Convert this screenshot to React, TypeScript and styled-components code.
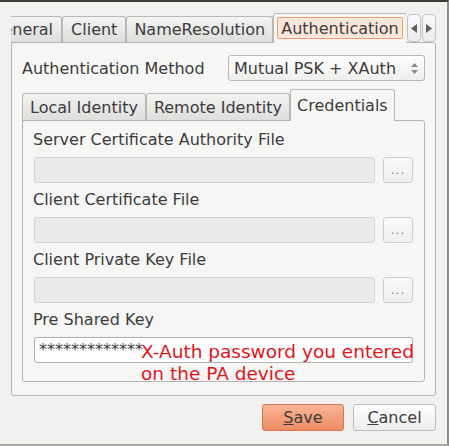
import React from "react";
import styled, { createGlobalStyle, css } from "styled-components";

const GlobalStyle = createGlobalStyle`
  html, body {
    margin: 0;
    padding: 0;
    background: #f2f1f0;
  }
  body {
    font-family: "DejaVu Sans", "Liberation Sans", sans-serif;
    font-size: 16px;
    color: #3c3c3c;
  }
`;

const Window = styled.div`
  width: 449px;
  height: 446px;
  box-sizing: border-box;
  border-top: 2px solid #3c3b37;
  border-right: 2px solid #8e8d8a;
  border-bottom: 2px solid #a9a8a5;
  padding: 11px 11px 0 11px;
  display: flex;
  flex-direction: column;
`;

const Notebook = styled.div`
  display: flex;
  flex-direction: column;
`;

const TabBar = styled.div<{ $h: number }>`
  display: flex;
  align-items: flex-end;
  height: ${p => p.$h}px;
  margin-bottom: -1px;
  position: relative;
  z-index: 1;
`;

const TabScroller = styled.div`
  flex: 1;
  display: flex;
  align-items: flex-end;
  height: 100%;
  overflow: hidden;
`;

const TabRow = styled.div<{ $shift?: number }>`
  display: flex;
  align-items: flex-end;
  margin-left: ${p => -(p.$shift || 0)}px;
`;

const Tab = styled.div<{ $active?: boolean; $h: number; $pad: number }>`
  flex: none;
  box-sizing: border-box;
  height: ${p => p.$h}px;
  padding: 0 ${p => p.$pad}px;
  display: flex;
  align-items: center;
  white-space: nowrap;
  border: 1px solid #b9b8b6;
  border-radius: 3px 3px 0 0;
  line-height: 19px;
  ${p =>
    p.$active
      ? css`
          background: #f6f6f5;
          border-bottom: none;
          padding-bottom: 1px;
        `
      : css`
          background: linear-gradient(#f3f3f2, #dededc);
          border-bottom-color: #b5b4b2;
        `}
`;

const FocusRing = styled.span`
  display: inline-flex;
  align-items: center;
  height: 22px;
  box-sizing: border-box;
  padding: 0 3px;
  border: 1px solid #f09a76;
  border-radius: 2px;
  background: #fde6da;
`;

const ScrollArrows = styled.div`
  display: flex;
  gap: 1px;
  margin-left: 1px;
  align-self: flex-start;
  margin-top: 1px;
`;

const ArrowButton = styled.div`
  width: 14px;
  height: 28px;
  box-sizing: border-box;
  border: 1px solid #c4c3c1;
  border-radius: 4px;
  background: linear-gradient(#fbfbfb, #ececeb);
  display: flex;
  align-items: center;
  justify-content: center;
`;

const Pane = styled.div<{ $pad: string }>`
  border: 1px solid #b5b4b2;
  border-radius: 3px;
  background: #f6f6f5;
  padding: ${p => p.$pad};
  display: flex;
  flex-direction: column;
`;

const MethodRow = styled.div`
  display: flex;
  align-items: center;
  justify-content: space-between;
  height: 26px;
  margin-bottom: 8px;
  line-height: 19px;
`;

const Combo = styled.div`
  width: 197px;
  height: 26px;
  box-sizing: border-box;
  border: 1px solid #b8b7b5;
  border-radius: 3px;
  background: linear-gradient(#fdfdfd, #efefee);
  display: flex;
  align-items: center;
  justify-content: space-between;
  padding: 0 6px 0 5px;
`;

const Field = styled.div`
  display: flex;
  flex-direction: column;
  & + & {
    margin-top: 7px;
  }
`;

const Label = styled.div`
  line-height: 19px;
  margin-bottom: 8px;
  white-space: nowrap;
`;

const InputRow = styled.div`
  display: flex;
  gap: 8px;
  height: 26px;
  position: relative;
`;

const TextBox = styled.div<{ $disabled?: boolean }>`
  flex: 1;
  box-sizing: border-box;
  border: 1px solid ${p => (p.$disabled ? "#d3d2d0" : "#b2b1af")};
  border-radius: 3px;
  background: ${p => (p.$disabled ? "#ebeae9" : "#ffffff")};
  margin-left: 1px;
  padding: 2px 4px 0;
  line-height: 19px;
  white-space: nowrap;
  overflow: hidden;
`;

const BrowseButton = styled.div`
  width: 30px;
  box-sizing: border-box;
  border: 1px solid #cfcecc;
  border-radius: 3px;
  background: linear-gradient(#f9f9f9, #efefee);
  color: #8f8e8c;
  font-size: 12px;
  letter-spacing: 1px;
  display: flex;
  align-items: flex-end;
  justify-content: center;
  padding-bottom: 5px;
`;

const Annotation = styled.div`
  position: absolute;
  left: 108px;
  top: 4px;
  color: #e3141b;
  font-size: 18.5px;
  line-height: 22px;
  white-space: nowrap;
  pointer-events: none;
`;

const ButtonRow = styled.div`
  display: flex;
  justify-content: flex-end;
  gap: 9px;
  margin-top: 8px;
`;

const DialogButton = styled.button<{ $primary?: boolean }>`
  width: ${p => (p.$primary ? 82 : 83)}px;
  height: 27px;
  box-sizing: border-box;
  border-radius: 3px;
  font-family: inherit;
  font-size: 16px;
  color: #3c3c3c;
  padding: 0;
  line-height: 19px;
  ${p =>
    p.$primary
      ? css`
          border: 1px solid #d4784f;
          background: linear-gradient(#f9b495, #ee8c64);
        `
      : css`
          border: 1px solid #bdbcba;
          background: linear-gradient(#fefefe, #ececeb);
        `}
`;

const Arrow = ({ dir }: { dir: "left" | "right" }) => (
  <svg width="6" height="9" viewBox="0 0 6 9">
    <path d={dir === "left" ? "M6 0 L0 4.5 L6 9 Z" : "M0 0 L6 4.5 L0 9 Z"} fill="#5f5e5c" />
  </svg>
);

const UpDown = () => (
  <svg width="7" height="13" viewBox="0 0 7 13">
    <path d="M0 5 L3.5 1 L7 5 Z M0 8 L3.5 12 L7 8 Z" fill="#8a8987" />
  </svg>
);

const BrowseField = ({ label }: { label: string }) => (
  <Field>
    <Label>{label}</Label>
    <InputRow>
      <TextBox $disabled />
      <BrowseButton>...</BrowseButton>
    </InputRow>
  </Field>
);

export default function App() {
  return (
    <Window>
      <GlobalStyle />
      <Notebook>
        <TabBar $h={30}>
          <TabScroller>
            <TabRow $shift={30}>
              <Tab $h={27} $pad={8}>General</Tab>
              <Tab $h={27} $pad={8}>Client</Tab>
              <Tab $h={27} $pad={7}>NameResolution</Tab>
              <Tab $active $h={30} $pad={3}>
                <FocusRing>Authentication</FocusRing>
              </Tab>
            </TabRow>
          </TabScroller>
          <ScrollArrows>
            <ArrowButton>
              <Arrow dir="left" />
            </ArrowButton>
            <ArrowButton>
              <Arrow dir="right" />
            </ArrowButton>
          </ScrollArrows>
        </TabBar>
        <Pane $pad="12px 10px 13px 10px">
          <MethodRow>
            <span>Authentication Method</span>
            <Combo>
              <span>Mutual PSK + XAuth</span>
              <UpDown />
            </Combo>
          </MethodRow>
          <Notebook>
            <TabBar $h={32}>
              <Tab $h={28} $pad={7}>Local Identity</Tab>
              <Tab $h={28} $pad={7}>Remote Identity</Tab>
              <Tab $active $h={32} $pad={6}>Credentials</Tab>
            </TabBar>
            <Pane $pad="9px 11px 18px 10px">
              <BrowseField label="Server Certificate Authority File" />
              <BrowseField label="Client Certificate File" />
              <BrowseField label="Client Private Key File" />
              <Field>
                <Label>Pre Shared Key</Label>
                <InputRow>
                  <TextBox>*************</TextBox>
                  <Annotation>
                    X-Auth password you entered
                    <br />
                    on the PA device
                  </Annotation>
                </InputRow>
              </Field>
            </Pane>
          </Notebook>
        </Pane>
      </Notebook>
      <ButtonRow>
        <DialogButton $primary>
          <u>S</u>ave
        </DialogButton>
        <DialogButton>
          <u>C</u>ancel
        </DialogButton>
      </ButtonRow>
    </Window>
  );
}
